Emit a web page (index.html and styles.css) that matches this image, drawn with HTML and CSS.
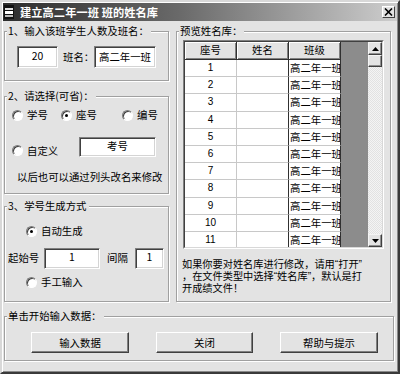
FILE: index.html
```html
<!DOCTYPE html>
<html lang="zh-CN">
<head>
<meta charset="utf-8">
<title>建立高二年一班 班的姓名库</title>
<link rel="stylesheet" href="styles.css">
</head>
<body>
<div class="window">
  <div class="titlebar">
    <svg class="app-icon" width="10" height="14" viewBox="0 0 10 14">
      <rect x="0" y="0" width="10" height="14" fill="#111"/>
      <rect x="1" y="3" width="8" height="2" fill="#ddd"/>
      <rect x="1" y="6" width="8" height="3" fill="#fff"/>
      <rect x="1" y="10" width="8" height="2" fill="#bbb"/>
    </svg>
    <span class="title">建立高二年一班 班的姓名库</span>
    <span class="close">
      <svg width="9" height="8" viewBox="0 0 9 8"><path d="M1 0.5L8 7.5M8 0.5L1 7.5" stroke="#000" stroke-width="1.6"/></svg>
    </span>
  </div>
  <div class="main">
    <div class="top">
      <div class="left">
        <div class="group g1">
          <div class="legend">1、输入该班学生人数及班名：</div>
          <div class="row1">
            <div class="tb tb-count">20</div>
            <span class="lbl-name">班名：</span>
            <div class="tb tb-class">高二年一班</div>
          </div>
        </div>
        <div class="group g2">
          <div class="legend">2、请选择(可省)：</div>
          <div class="radio-row">
            <label class="opt"><span class="radio"></span><span>学号</span></label>
            <label class="opt"><span class="radio checked"></span><span>座号</span></label>
            <label class="opt"><span class="radio"></span><span>编号</span></label>
          </div>
          <div class="custom-row">
            <label class="opt opt-custom"><span class="radio"></span><span>自定义</span></label>
            <div class="tb tb-custom">考号</div>
          </div>
          <div class="hint">以后也可以通过列头改名来修改</div>
        </div>
        <div class="group g3">
          <div class="legend">3、学号生成方式</div>
          <label class="opt opt-auto"><span class="radio checked"></span><span>自动生成</span></label>
          <div class="start-row">
            <span class="lbl-start">起始号</span>
            <div class="tb tb-start">1</div>
            <span class="lbl-step">间隔</span>
            <div class="tb tb-step">1</div>
          </div>
          <label class="opt opt-manual"><span class="radio"></span><span>手工输入</span></label>
        </div>
      </div>
      <div class="group right">
        <div class="legend">预览姓名库：</div>
        <div class="grid">
          <div class="grid-inner">
            <div class="cells">
              <div class="tbl">
                <div class="th">座号</div><div class="th">姓名</div><div class="th">班级</div>
                <div class="td c1">1</div><div class="td c2"></div><div class="td c3">高二年一班</div>
                <div class="td c1">2</div><div class="td c2"></div><div class="td c3">高二年一班</div>
                <div class="td c1">3</div><div class="td c2"></div><div class="td c3">高二年一班</div>
                <div class="td c1">4</div><div class="td c2"></div><div class="td c3">高二年一班</div>
                <div class="td c1">5</div><div class="td c2"></div><div class="td c3">高二年一班</div>
                <div class="td c1">6</div><div class="td c2"></div><div class="td c3">高二年一班</div>
                <div class="td c1">7</div><div class="td c2"></div><div class="td c3">高二年一班</div>
                <div class="td c1">8</div><div class="td c2"></div><div class="td c3">高二年一班</div>
                <div class="td c1">9</div><div class="td c2"></div><div class="td c3">高二年一班</div>
                <div class="td c1">10</div><div class="td c2"></div><div class="td c3">高二年一班</div>
                <div class="td c1">11</div><div class="td c2"></div><div class="td c3">高二年一班</div>
              </div>
            </div>
            <div class="vscroll">
              <div class="sbtn"><svg width="7" height="4" viewBox="0 0 7 4"><path d="M0 4H7L3.5 0Z" fill="#000"/></svg></div>
              <div class="thumb"></div>
              <div class="track"></div>
              <div class="sbtn"><svg width="7" height="4" viewBox="0 0 7 4"><path d="M0 0H7L3.5 4Z" fill="#000"/></svg></div>
            </div>
          </div>
        </div>
        <div class="note">
          <div class="note-line">如果你要对姓名库进行修改，请用“打开”</div>
          <div class="note-line">，在文件类型中选择“姓名库”，默认是打</div>
          <div class="note-line">开成绩文件！</div>
        </div>
      </div>
    </div>
    <div class="group g4">
      <div class="legend">单击开始输入数据：</div>
      <div class="btn-row">
        <button class="btn b1" type="button">输入数据</button>
        <button class="btn b2" type="button">关闭</button>
        <button class="btn b3" type="button">帮助与提示</button>
      </div>
    </div>
  </div>
</div>
</body>
</html>
```

FILE: styles.css
```css
* { box-sizing: border-box; }

body {
  margin: 0;
  font-family: "Noto Sans CJK SC", "Noto Sans", sans-serif;
  font-size: 10.4px;
  line-height: 14px;
  color: #000;
  background: #e3e3e3;
}

.window {
  width: 400px;
  height: 374px;
  border: 2px solid;
  border-color: #d8d8d8 #3a3a3a #3a3a3a #d8d8d8;
  padding: 1px;
  background: #e3e3e3;
  box-shadow: inset 1px 1px 0 #fff, inset -1px -1px 0 #8a8a8a;
  display: flex;
  flex-direction: column;
}

/* title bar */
.titlebar {
  height: 18px;
  flex: none;
  display: flex;
  align-items: center;
  padding: 0 2px 0 1px;
  background: linear-gradient(90deg, #2c2c2c 0%, #6a6a6a 45%, #cdcdcd 100%);
}
.app-icon { flex: none; margin-right: 6px; }
.title {
  flex: 1;
  color: #fff;
  font-weight: bold;
  font-size: 11.2px;
  line-height: 18px;
  letter-spacing: 0.1px;
}
.close {
  width: 13px;
  height: 12px;
  flex: none;
  display: flex;
  align-items: center;
  justify-content: center;
  background: #e3e3e3;
  border: 1px solid;
  border-color: #fff #404040 #404040 #fff;
}

/* layout */
.main {
  flex: 1;
  display: flex;
  flex-direction: column;
  padding: 10px 6px 0 1px;
}
.top { display: flex; gap: 7px; }
.left { width: 165px; display: flex; flex-direction: column; }

.group {
  position: relative;
  border: 1px solid #a0a0a0;
  box-shadow: inset 1px 1px 0 #fff, 1px 1px 0 #fff;
}
.legend {
  position: absolute;
  top: -8px;
  left: 2px;
  padding: 0 2px 0 1px;
  background: #e3e3e3;
  white-space: nowrap;
  line-height: 14px;
}

/* inputs */
.tb {
  background: #fff;
  border: 1px solid;
  border-color: #808080 #fff #fff #808080;
  box-shadow: inset 1px 1px 0 #404040, inset -1px -1px 0 #d4d4d4;
  white-space: nowrap;
  overflow: hidden;
}
.opt { display: flex; align-items: center; gap: 4px; white-space: nowrap; }
.radio {
  position: relative;
  width: 11px;
  height: 11px;
  flex: none;
  border-radius: 50%;
  background: #fff;
  border: 1px solid;
  border-color: #7a7a7a #fff #fff #7a7a7a;
  box-shadow: inset 1px 1px 0 #404040;
}
.radio.checked::after {
  content: "";
  position: absolute;
  left: 3px;
  top: 3px;
  width: 3px;
  height: 3px;
  border-radius: 50%;
  background: #000;
}

/* group 1 */
.g1 { height: 50px; padding: 14px 0 0 12px; }
.row1 { display: flex; align-items: center; }
.tb-count { width: 41px; height: 22px; text-align: center; padding-top: 2px; }
.lbl-name { width: 31px; margin-left: 5px; white-space: nowrap; flex: none; }
.tb-class { width: 62px; height: 22px; padding: 3px 0 0 4px; flex: none; }

/* group 2 */
.g2 { height: 98px; margin-top: 15px; padding: 11px 0 0 7px; }
.radio-row { display: grid; grid-template-columns: 49px 61px auto; height: 14px; }
.custom-row { display: flex; margin-top: 15px; height: 20px; }
.opt-custom { width: 67px; margin-top: 7px; }
.tb-custom { width: 77px; height: 20px; text-align: center; padding-top: 1px; }
.hint { margin-top: 13px; padding-left: 5px; white-space: nowrap; }

/* group 3 */
.g3 { height: 96px; margin-top: 12px; padding: 17px 0 0 0; }
.opt-auto, .opt-manual { margin-left: 21px; height: 14px; }
.start-row { display: flex; align-items: center; margin-top: 10px; padding-left: 3px; height: 20px; }
.lbl-start { width: 36px; white-space: nowrap; }
.tb-start { width: 56px; height: 21px; text-align: center; padding-top: 1px; }
.lbl-step { margin-left: 7px; width: 28px; white-space: nowrap; }
.tb-step { width: 29px; height: 21px; text-align: center; padding-top: 1px; }
.opt-manual { margin-top: 7px; }

/* right group */
.right { width: 215px; height: 271px; padding: 8px 0 0 6px; }
.grid {
  width: 201px;
  height: 209px;
  border: 1px solid;
  border-color: #808080 #fff #fff #808080;
}
.grid-inner {
  height: 100%;
  border: 1px solid;
  border-color: #404040 #d8d8d8 #d8d8d8 #404040;
  display: flex;
}
.cells { flex: 1; background: #8c8c8c; overflow: hidden; }
.tbl {
  display: grid;
  grid-template-columns: 52px 52px 52px;
  grid-template-rows: 18px;
  grid-auto-rows: 17.2px;
  width: 156px;
}
.th {
  background: #e3e3e3;
  text-align: center;
  line-height: 16px;
  box-shadow: inset 1px 1px 0 #fff, inset -1px -1px 0 #808080;
  border-right: 1px solid #303030;
  border-bottom: 1px solid #303030;
}
.td {
  background: #fff;
  border-right: 1px solid #c8c8c8;
  border-bottom: 1px solid #c8c8c8;
  line-height: 16px;
  white-space: nowrap;
  overflow: hidden;
}
.c1 { text-align: center; font-family: "Liberation Sans", sans-serif; font-size: 10px; }
.c2 { border-right-color: #303030; }
.c3 { padding-left: 1px; border-right-color: #303030; }

.vscroll {
  width: 14px;
  flex: none;
  display: flex;
  flex-direction: column;
  background: repeating-conic-gradient(#f4f4f4 0 25%, #e2e2e2 0 50%) 0 0 / 2px 2px;
}
.sbtn, .thumb {
  background: #e3e3e3;
  border: 1px solid;
  border-color: #f4f4f4 #404040 #404040 #f4f4f4;
  box-shadow: inset -1px -1px 0 #909090;
}
.sbtn { height: 13px; display: flex; align-items: center; justify-content: center; }
.thumb { height: 12px; }
.track { flex: 1; }

.note {
  margin: 10px 0 0 -1px;
  font-family: "Liberation Sans", "Noto Sans CJK SC", sans-serif;
  font-size: 10.2px;
}
.note-line {
  height: 12px;
  line-height: 12px;
  white-space: nowrap;
}

/* bottom group */
.g4 { width: 390px; height: 45px; margin-top: 14px; padding: 15px 0 0 26px; }
.btn-row { display: flex; gap: 27px; }
.btn {
  height: 21px;
  padding: 0;
  font: inherit;
  color: #000;
  background: #e3e3e3;
  border: 1px solid;
  border-color: #fff #404040 #404040 #fff;
  box-shadow: inset -1px -1px 0 #808080;
  display: flex;
  align-items: center;
  justify-content: center;
}
.b1, .b3 { width: 98px; }
.b2 { width: 97px; }
```
